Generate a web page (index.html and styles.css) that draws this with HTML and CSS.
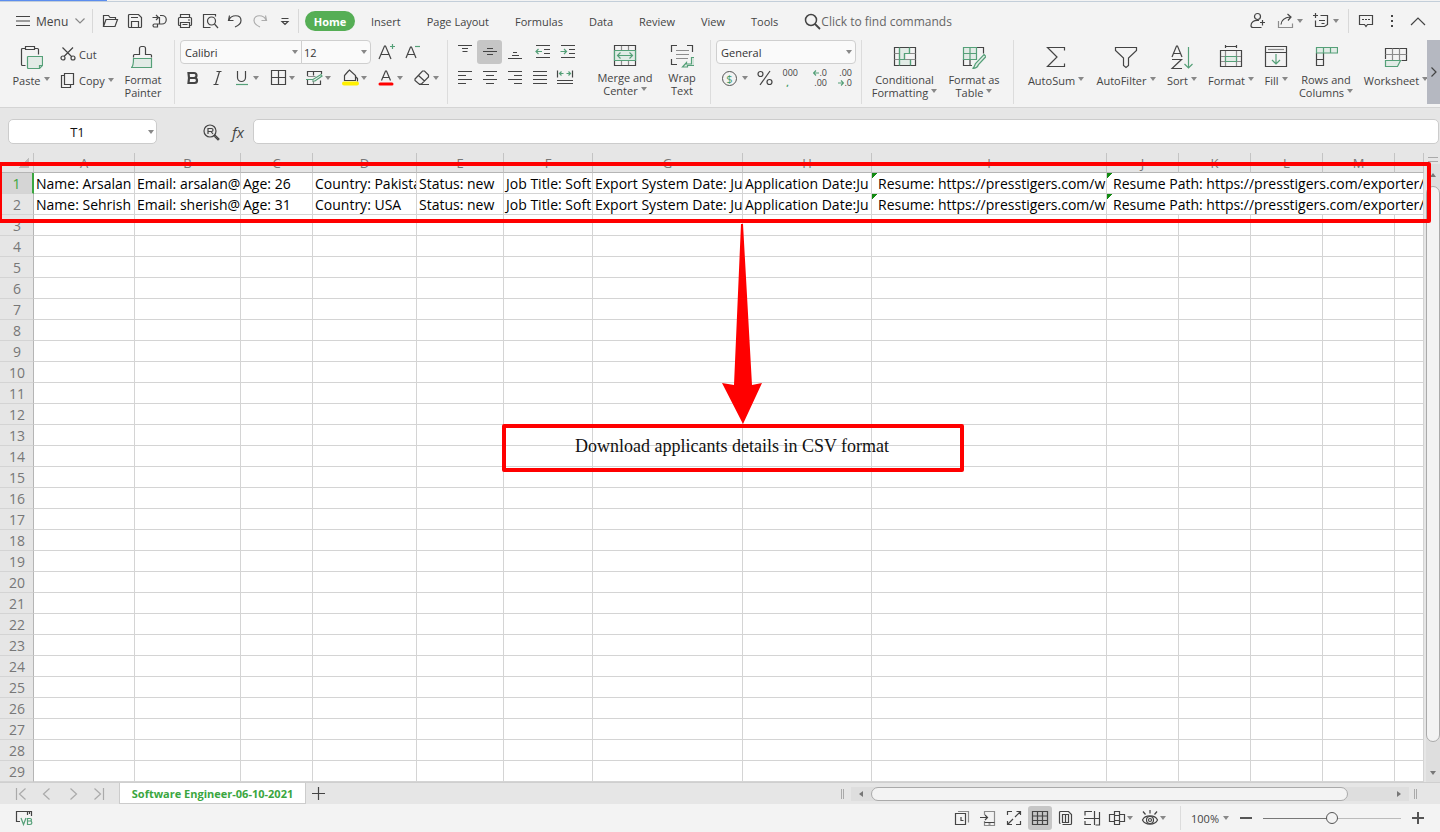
FILE: index.html
```html
<!DOCTYPE html>
<html lang="en">
<head>
<meta charset="utf-8">
<title>Software Engineer-06-10-2021</title>
<link rel="stylesheet" href="styles.css">
</head>
<body>
<svg class="sprite" aria-hidden="true">
  <!-- quick access, 18x18 -->
  <symbol id="i-open" viewBox="0 0 18 18"><path d="M2.500 14V3.500h5l1.500 2H14.500v2M2.500 14.500h11.500l2.500-7H5z"/></symbol>
  <symbol id="i-save" viewBox="0 0 18 18"><path d="M2.500 13V3.500a1 1 0 0 1 1-1h9l3 3v9a1 1 0 0 1-1 1h-11a1 1 0 0 1-1-1zM5.500 15.500v-6h7v6M5 5.500h7"/></symbol>
  <symbol id="i-export" viewBox="0 0 18 18"><path d="M1.500 5.500h5M5 3l2.500 2.500L5 8M9 3.500h2a4 4 0 0 1 0 8.500H6.500V15h-3a1.500 1.500 0 0 1 0-3H8.500V5"/></symbol>
  <symbol id="i-print" viewBox="0 0 18 18"><path d="M4.500 5.500v-3h9v3M4.500 13.500h-1a1 1 0 0 1-1-1v-6a1 1 0 0 1 1-1h11a1 1 0 0 1 1 1v6a1 1 0 0 1-1 1h-1M4.500 10.500h9v5h-9zM6.500 12.500h5M12 8h2"/></symbol>
  <symbol id="i-preview" viewBox="0 0 18 18"><path d="M14.500 4.500v-2h-12v13h7"/><circle cx="10.500" cy="9" r="4"/><path d="M13.500 12l3.500 4"/></symbol>
  <symbol id="i-undo" viewBox="0 0 18 18"><path d="M3.500 3.500L2.500 8.500h5M3 8C5 2.500 15 2 15 8.500c0 3-2.500 5-6 6.500"/></symbol>
  <symbol id="i-redo" viewBox="0 0 18 18"><path d="M14.500 3.500l1 5h-5M15 8C13 2.500 3 2 3 8.500c0 3 2.500 5 6 6.500"/></symbol>
  <symbol id="i-more" viewBox="0 0 18 18"><path d="M5.500 6.500h7M6 9.500l3 3 3-3z"/></symbol>
  <symbol id="i-burger" viewBox="0 0 14 12"><path d="M0 1.500h14M0 6h14M0 10.500h14"/></symbol>
  <symbol id="i-down" viewBox="0 0 10 6"><path d="M.5.5l4.500 4.500L9.500.5"/></symbol>
  <symbol id="i-up" viewBox="0 0 16 10"><path d="M1 9l7-7 7 7"/></symbol>
  <symbol id="i-search" viewBox="0 0 18 18"><circle cx="8" cy="8" r="5.500" stroke-width="1.500"/><path stroke-width="1.800" d="M12 12l5 5"/></symbol>
  <symbol id="i-person" viewBox="0 0 18 18"><circle cx="8.500" cy="4.500" r="3"/><path d="M10 8.500C5 7.500 2 10.500 2 13.500c0 1.500.5 2 2 2h8.500M13.500 8v5.500M11 10.500h5"/></symbol>
  <symbol id="i-share" viewBox="0 0 18 18"><path class="s" d="M2.500 9v6.500h14v-4"/><path d="M5 12.500c.5-5 4-7 9-7.500M11.500 2l3.500 3-3 3.500"/></symbol>
  <symbol id="i-addon" viewBox="0 0 18 18"><path d="M3.500 1v5M1 3.500h5M8.500 3.500h7v9l-3 2h-9V8.500M7 8.500h6M9.500 11.500h3"/></symbol>
  <symbol id="i-chat" viewBox="0 0 18 18"><path d="M2.500 3.500h13v9h-5L9 14.500l-1.500-2h-5zM5 7.500h2M8 7.500h2M11 7.500h2"/></symbol>
  <symbol id="i-dots" viewBox="0 0 4 14"><path stroke-width="2" d="M1 2h2M1 7h2M1 12h2"/></symbol>
  <!-- ribbon, large 24x24 -->
  <symbol id="b-paste" viewBox="0 0 24 24"><path d="M6.500 3.500h-3a1 1 0 0 0-1 1v15a1 1 0 0 0 1 1h3M15.500 3.500h3a1 1 0 0 1 1 1v5M6.500 1.500h9v3h-9z"/><path class="gf" d="M8.500 11.500h15v9l-3 3H9.500a1 1 0 0 1-1-1v-11M23.500 20.500h-3v3"/></symbol>
  <symbol id="b-painter" viewBox="0 0 24 24"><path d="M2.500 12.500v-2a1 1 0 0 1 1-1h5v-6a2 2 0 0 1 2-2h2a2 2 0 0 1 2 2v6h5a1 1 0 0 1 1 1v2"/><path class="gf" d="M2.500 13.500h18v9h-20c1.500-1 2-3 2-9z"/></symbol>
  <symbol id="b-merge" viewBox="0 0 24 24"><path d="M1.500 1.500h21v20h-21z"/><path class="s" d="M8.500 2v4.500M15.500 2v4.500M8.500 17v4M15.500 17v4"/><path class="gf" d="M1.500 6.500h21v10h-21z"/><path class="g" d="M5 11.500h14M7.500 8.500l-3 3 3 3M16.500 8.500l3 3-3 3"/></symbol>
  <symbol id="b-wrap" viewBox="0 0 24 24"><path d="M7 1.500H1.500V8M17 1.500h5.500V8M1.500 15v5.500H7"/><path class="s" d="M6 6.500h13M6 10.500h13M6 14.500h12"/><path class="gf" d="M21.500 13.500h3v8h-7v1.500h-5l4-4.500v1.500h5z"/></symbol>
  <symbol id="b-cond" viewBox="0 0 24 24"><path class="gf" d="M6.500 2.500h10v6h-5v6h-5zM6.500 14.500h11v6h-11z"/><path d="M1.500 2.500h21v18h-21z"/><path class="s" d="M1.500 8.500h5M1.500 14.500h5M17 8.500h5.500M12 14.500h10.500"/><path class="g" d="M6.500 2.500v18M11.500 8.500h5v-6M17.500 14.500v6M11.500 8.500v6"/></symbol>
  <symbol id="b-table" viewBox="0 0 24 24"><path d="M15 2.500h6.500v6M1.500 14v6.500H10M8 14v6M1.500 14.500h5"/><path class="gf" d="M1.500 2.500h13v12h-13z"/><path class="g" d="M1.500 8.500h13M8 2.500v12"/><path class="gf" d="M22 9.500l2 2-7.500 8c-1 3-3 4-6 4 2-1 2-3 3-5z"/></symbol>
  <symbol id="b-sum" viewBox="0 0 24 24"><path d="M20.500 5.500v-3h-17l9.500 9.500-9.500 9.500h17v-3"/></symbol>
  <symbol id="b-filter" viewBox="0 0 24 24"><path d="M1.500 2.500h21v3l-8 7.500v7.500l-2.500 2-2.500-2V13l-8-7.500z"/></symbol>
  <symbol id="b-sort" viewBox="0 0 24 24"><path d="M2 12L6.500 1h1L12 12M3.500 8.500h7M2 14.500h9.500L2 23.500h10"/><path class="g" d="M18.500 2v21M14.500 19l4 4 4-4"/></symbol>
  <symbol id="b-format" viewBox="0 0 24 24"><path d="M6 1.500h12M6.500 0v3M17.500 0v3M1.500 5.500h21v16h-21z"/><path class="s" d="M6.500 6v15M17.500 6v15M2 11.500h20M2 16.500h20"/><path class="gf" d="M6.500 11.500h11v5h-11z"/></symbol>
  <symbol id="b-fill" viewBox="0 0 24 24"><path d="M1.500 1.500h21v20h-21zM1.500 7.500h21"/><path class="s" d="M4 4.500h16"/><path class="g" d="M12 9v10M8 15l4 4 4-4"/></symbol>
  <symbol id="b-rows" viewBox="0 0 24 24"><path d="M2.500 8v12.500h7V8M2.500 14.500h7"/><path class="gf" d="M2.500 2.500h21v5.500h-21z"/><path class="g" d="M9.500 2.500V8M16.500 2.500V8"/></symbol>
  <symbol id="b-work" viewBox="0 0 24 24"><path d="M1.500 14V3.500h21v12h-5"/><path class="s" d="M8.500 3.500v12M15.500 3.500v12M1.500 9.500h21"/><path class="gf" d="M1.500 15.500h15l-3 6h-12z"/></symbol>
  <!-- ribbon, small 20x20 -->
  <symbol id="s-cut" viewBox="0 0 16 16"><path d="M2.500 1.500L12 11M13 1.500L4 10.500"/><circle cx="3" cy="12" r="2"/><circle cx="13" cy="12" r="2"/></symbol>
  <symbol id="s-copy" viewBox="0 0 16 16"><path d="M4.500 1.500h9v11h-9zM4.500 3.500h-3v12h9v-3"/></symbol>
  <symbol id="s-bigger" viewBox="0 0 20 20"><path d="M2 17L7.500 4h1L14 17M4 12.500h8"/><path class="g" d="M13 4.500h5M15.500 2v5"/></symbol>
  <symbol id="s-smaller" viewBox="0 0 20 20"><path d="M4 16L8.500 5h1L14 16M5.500 12.500h7"/><path class="g" d="M13 4.500h5"/></symbol>
  <symbol id="s-bold" viewBox="0 0 20 20"><path stroke-width="2.200" d="M5.500 5H11a2.300 2.300 0 0 1 0 5H6zM6 10h5.500a2.500 2.500 0 0 1 0 5h-6z"/></symbol>
  <symbol id="s-italic" viewBox="0 0 20 20"><path d="M8.500 3.500h5M5.500 16.500h5M11.500 3.500l-4 13"/></symbol>
  <symbol id="s-under" viewBox="0 0 20 20"><path d="M5.500 3v6.500a4 4 0 0 0 8 0V3"/><path class="g" d="M4 16.500h12"/></symbol>
  <symbol id="s-border" viewBox="0 0 20 20"><path d="M3.500 2.500h14v14h-14zM10.500 2.500v14M3.500 9.500h14"/></symbol>
  <symbol id="s-style" viewBox="0 0 20 20"><path d="M17.500 6V3.500h-14v4.500M3.500 12v4.500h13v-4M9.500 3.500v4"/><path class="s" d="M3.500 8.500h8M9.500 13v3"/><path class="g" d="M2 11.500h7l8-5 1 1.500-7 5H8"/></symbol>
  <symbol id="s-fill" viewBox="0 0 20 20"><path d="M8 3.500l1.500-1.500 6 5.500v5h-11v-5zM15 8l2.500 2.500v3"/><path class="yellow" d="M4 15.500h13"/></symbol>
  <symbol id="s-color" viewBox="0 0 20 20"><path d="M5.500 12.500L9.500 3h1l4 9.500M7 9.500h6"/><path class="red" d="M4 16h12"/></symbol>
  <symbol id="s-erase" viewBox="0 0 20 20"><path d="M3 11l7.500-8h2l4 4v2L9.500 16H7l-4-3.500zM6.500 7.500l6 5.500M7 16.500h10"/></symbol>
  <symbol id="s-top" viewBox="0 0 20 20"><path d="M3 3.500h14M7 6.500h6M7.500 9.500h5"/></symbol>
  <symbol id="s-mid" viewBox="0 0 20 20"><path d="M7 6.500h6M3 9.500h14M7 12.500h6"/></symbol>
  <symbol id="s-bot" viewBox="0 0 20 20"><path d="M8 10.500h4M7 13.500h7M3 16.500h14"/></symbol>
  <symbol id="s-outd" viewBox="0 0 20 20"><path d="M3 3.500h14M11 7.500h6M11 11.500h6M3 15.500h14"/><path class="g" d="M3 9.500h6M5.500 7L3 9.500 5.500 12"/></symbol>
  <symbol id="s-ind" viewBox="0 0 20 20"><path d="M3 3.500h14M11 7.500h6M11 11.500h6M3 15.500h14"/><path class="g" d="M2.500 9.500h6M6 7l2.500 2.500L6 12"/></symbol>
  <symbol id="s-left" viewBox="0 0 20 20"><path d="M3 3.500h14M3 7.500h8M3 11.500h14M3 15.500h8"/></symbol>
  <symbol id="s-cen" viewBox="0 0 20 20"><path d="M3 3.500h14M6 7.500h8M3 11.500h14M6 15.500h8"/></symbol>
  <symbol id="s-right" viewBox="0 0 20 20"><path d="M3 3.500h14M9 7.500h8M3 11.500h14M9 15.500h8"/></symbol>
  <symbol id="s-just" viewBox="0 0 20 20"><path d="M3 3.500h14M3 7.500h14M3 11.500h14M3 15.500h14"/></symbol>
  <symbol id="s-dist" viewBox="0 0 20 20"><path d="M2.500 2.500v7M17.500 2.500v7M2 12.500h16M2 15.500h16"/><path class="g" d="M4.500 5.500h4M11.500 5.500h4M6.500 3.500l-2 2 2 2M13.500 3.500l2 2-2 2"/></symbol>
  <symbol id="s-arrowl" viewBox="0 0 6 6"><path class="g" d="M.5 3h5.500M3 .5L.5 3 3 5.500"/></symbol>
  <symbol id="s-arrowr" viewBox="0 0 6 6"><path class="g" d="M0 3h5.500M3 .5L5.500 3 3 5.500"/></symbol>
  <symbol id="s-percent" viewBox="0 0 20 20"><circle cx="5.500" cy="6" r="2.500"/><circle cx="14.500" cy="14" r="2.500"/><path d="M15 3L5 17"/></symbol>
  <!-- formula bar, sheet bar and status bar, 18x18 -->
  <symbol id="i-cellfind" viewBox="0 0 18 18"><circle cx="8" cy="8" r="6"/><path d="M6 11V5.500h3.500a1.500 1.500 0 0 1 0 3H6M9 8.500l2 2.500M12 13l1-1 4 4-1 1z"/></symbol>
  <symbol id="n-first" viewBox="0 0 12 12"><path d="M1.500 0v12M10.500.5L4.500 6l6 5.500"/></symbol>
  <symbol id="n-prev" viewBox="0 0 12 12"><path d="M8.500.5L2.500 6l6 5.500"/></symbol>
  <symbol id="n-next" viewBox="0 0 12 12"><path d="M3.500.5l6 5.500-6 5.500"/></symbol>
  <symbol id="n-last" viewBox="0 0 12 12"><path d="M10.500 0v12M1.500.5l6 5.500-6 5.500"/></symbol>
  <symbol id="i-plus" viewBox="0 0 14 14"><path d="M6.500 0v13M0 6.500h13"/></symbol>
  <symbol id="t-vb" viewBox="0 0 18 18"><path d="M5 12.500H1.500v-10h12M12.500 6V2.500h4V7M14.500 2v3"/><path class="g" d="M6 9l2.500 6.500L11 9M12.500 9.500h2.500c2 0 2 2.500 0 2.500h-2.500zM12.500 12H15c2.500 0 2.500 3.500 0 3.500h-2.500z"/></symbol>
  <symbol id="t-clock" viewBox="0 0 18 18"><path class="s" d="M5 2.500h10.500v11"/><path d="M2.500 4.500h10v11h-10zM8 8v3.500h2.500"/></symbol>
  <symbol id="t-phone" viewBox="0 0 18 18"><path class="s" d="M5.500 6V2.500h10v14h-10V12"/><path d="M5.500 13.500h10M1 8.500h7.500M6 6l2.500 2.500L6 11M9.500 15h2"/></symbol>
  <symbol id="t-full" viewBox="0 0 18 18"><path d="M2.500 6V2.500H7M11.500 2.500h4V6M2.500 12v3.500H7M11 15.500h4.500V12M15 3l-5 5M3 15l5-5"/></symbol>
  <symbol id="t-grid" viewBox="0 0 18 18"><path d="M1.500 2.500h15v13h-15zM6.500 2.500v13M11.500 2.500v13M1.500 7h15M1.500 11.500h15"/></symbol>
  <symbol id="t-page" viewBox="0 0 18 18"><path d="M3.500 14.500a1 1 0 0 1-1-1v-10a1 1 0 0 1 1-1h8l3 3V14.500a1 1 0 0 1-1 1h-8M5.500 5.500h6v8h-6zM8.500 5.500v8"/></symbol>
  <symbol id="t-break" viewBox="0 0 18 18"><path d="M2 6.500v-4h7M16.500 3v13h-4M1 9.500h16M2 12v3.500h6M11.500 2v7M11.500 9v7"/></symbol>
  <symbol id="t-cross" viewBox="0 0 18 18"><path d="M6.500 2.500h5v13h-5zM6 5.500H1.500v7H6M12 5.500h4.500v7H12M6.500 6.500h5M6.500 11.500h5"/></symbol>
  <symbol id="t-eye" viewBox="0 0 18 18"><path d="M1.500 11C4 5.500 14 5.500 16.500 11 14 16.500 4 16.500 1.500 11zM9 1v3.500M2 2.500l2.500 3M16 2.500l-2.500 3"/><circle cx="9" cy="11" r="3.500"/><circle cx="9" cy="11" r="1.500"/></symbol>
</svg>

<div class="window-edge"><div class="window-edge-active"></div></div>

<header class="menubar">
  <button class="menu-btn"><svg class="burger"><use href="#i-burger"/></svg>Menu<svg class="chev"><use href="#i-down"/></svg></button>
  <div class="quick">
    <button aria-label="Open"><svg><use href="#i-open"/></svg></button>
    <button aria-label="Save"><svg><use href="#i-save"/></svg></button>
    <button aria-label="Export"><svg><use href="#i-export"/></svg></button>
    <button aria-label="Print"><svg><use href="#i-print"/></svg></button>
    <button aria-label="Print preview"><svg><use href="#i-preview"/></svg></button>
    <button aria-label="Undo"><svg><use href="#i-undo"/></svg></button>
    <button aria-label="Redo" class="faded"><svg><use href="#i-redo"/></svg></button>
    <button aria-label="More"><svg><use href="#i-more"/></svg></button>
  </div>
  <nav class="tabs">
    <button class="tab-on">Home</button>
    <button>Insert</button>
    <button>Page Layout</button>
    <button>Formulas</button>
    <button>Data</button>
    <button>Review</button>
    <button>View</button>
    <button>Tools</button>
  </nav>
  <label class="search"><svg><use href="#i-search"/></svg><input type="text" aria-label="Find commands" placeholder="Click to find commands"></label>
  <div class="account">
    <button aria-label="Collaborate"><svg><use href="#i-person"/></svg></button>
    <button aria-label="Share" class="drop"><svg><use href="#i-share"/></svg><i class="caret"></i></button>
    <button aria-label="Add-ons" class="drop"><svg><use href="#i-addon"/></svg><i class="caret"></i></button>
    <div class="account-end">
      <button aria-label="Comments"><svg><use href="#i-chat"/></svg></button>
      <button aria-label="Options"><svg class="dots"><use href="#i-dots"/></svg></button>
      <button aria-label="Collapse ribbon"><svg class="up"><use href="#i-up"/></svg></button>
    </div>
  </div>
</header>

<section class="ribbon" aria-label="Home">
  <div class="group g-clip">
    <button class="big"><svg><use href="#b-paste"/></svg><span>Paste<i class="caret"></i></span></button>
    <div class="small-col">
      <button><svg><use href="#s-cut"/></svg>Cut</button>
      <button><svg><use href="#s-copy"/></svg>Copy<i class="caret"></i></button>
    </div>
    <button class="big two painter"><svg><use href="#b-painter"/></svg><span>Format<br>Painter</span></button>
  </div>
  <div class="group g-font">
    <div class="rows">
      <div class="row">
        <div class="combo font-name"><select aria-label="Font"><option>Calibri</option></select><i class="caret"></i></div>
        <div class="combo font-size"><select aria-label="Font size"><option>12</option></select><i class="caret"></i></div>
        <button class="tool grow" aria-label="Increase font size"><svg><use href="#s-bigger"/></svg></button>
        <button class="tool" aria-label="Decrease font size"><svg><use href="#s-smaller"/></svg></button>
      </div>
      <div class="row">
        <button class="tool" aria-label="Bold"><svg><use href="#s-bold"/></svg></button>
        <button class="tool" aria-label="Italic"><svg><use href="#s-italic"/></svg></button>
        <button class="tool split" aria-label="Underline"><svg><use href="#s-under"/></svg><i class="caret"></i></button>
        <button class="tool split" aria-label="Borders"><svg><use href="#s-border"/></svg><i class="caret"></i></button>
        <button class="tool split" aria-label="Cell style"><svg><use href="#s-style"/></svg><i class="caret"></i></button>
        <button class="tool split" aria-label="Fill color"><svg><use href="#s-fill"/></svg><i class="caret"></i></button>
        <button class="tool split" aria-label="Font color"><svg><use href="#s-color"/></svg><i class="caret"></i></button>
        <button class="tool split" aria-label="Clear"><svg><use href="#s-erase"/></svg><i class="caret"></i></button>
      </div>
    </div>
  </div>
  <div class="group g-align">
    <div class="rows">
      <div class="row">
        <button class="tool" aria-label="Top align"><svg><use href="#s-top"/></svg></button>
        <button class="tool pressed" aria-label="Middle align"><svg><use href="#s-mid"/></svg></button>
        <button class="tool" aria-label="Bottom align"><svg><use href="#s-bot"/></svg></button>
        <button class="tool indent" aria-label="Decrease indent"><svg><use href="#s-outd"/></svg></button>
        <button class="tool" aria-label="Increase indent"><svg><use href="#s-ind"/></svg></button>
      </div>
      <div class="row">
        <button class="tool" aria-label="Align left"><svg><use href="#s-left"/></svg></button>
        <button class="tool" aria-label="Center"><svg><use href="#s-cen"/></svg></button>
        <button class="tool" aria-label="Align right"><svg><use href="#s-right"/></svg></button>
        <button class="tool" aria-label="Justify"><svg><use href="#s-just"/></svg></button>
        <button class="tool" aria-label="Distribute"><svg><use href="#s-dist"/></svg></button>
      </div>
    </div>
    <button class="big merge"><svg><use href="#b-merge"/></svg><span>Merge and<br>Center<i class="caret"></i></span></button>
    <button class="big wrap"><svg><use href="#b-wrap"/></svg><span>Wrap<br>Text</span></button>
  </div>
  <div class="group g-number">
    <div class="rows">
      <div class="row">
        <div class="combo number"><select aria-label="Number format"><option>General</option></select><i class="caret"></i></div>
      </div>
      <div class="row">
        <button class="tool split" aria-label="Currency"><span class="coin">$</span><i class="caret"></i></button>
        <button class="tool" aria-label="Percent"><svg><use href="#s-percent"/></svg></button>
        <button class="tool digits" aria-label="Comma style"><span>000</span><b>,</b></button>
        <button class="tool digits dec" aria-label="Increase decimal"><span><svg><use href="#s-arrowl"/></svg>.0</span><span>.00</span></button>
        <button class="tool digits" aria-label="Decrease decimal"><span>.00</span><span><svg><use href="#s-arrowr"/></svg>.0</span></button>
      </div>
    </div>
  </div>
  <div class="group g-style">
    <button class="big two cond"><svg><use href="#b-cond"/></svg><span>Conditional<br>Formatting<i class="caret"></i></span></button>
    <button class="big two astable"><svg><use href="#b-table"/></svg><span>Format as<br>Table<i class="caret"></i></span></button>
  </div>
  <div class="group g-edit">
    <button class="big w70"><svg><use href="#b-sum"/></svg><span>AutoSum<i class="caret"></i></span></button>
    <button class="big w70"><svg><use href="#b-filter"/></svg><span>AutoFilter<i class="caret"></i></span></button>
    <button class="big w42"><svg><use href="#b-sort"/></svg><span>Sort<i class="caret"></i></span></button>
    <button class="big w56"><svg><use href="#b-format"/></svg><span>Format<i class="caret"></i></span></button>
    <button class="big w34"><svg><use href="#b-fill"/></svg><span>Fill<i class="caret"></i></span></button>
    <button class="big two w66"><svg><use href="#b-rows"/></svg><span>Rows and<br>Columns<i class="caret"></i></span></button>
    <button class="big w74"><svg><use href="#b-work"/></svg><span>Worksheet<i class="caret"></i></span></button>
  </div>
  <button class="ribbon-next" aria-label="Scroll ribbon"><svg><use href="#i-down"/></svg></button>
</section>

<section class="formula" aria-label="Formula bar">
  <div class="namebox"><input type="text" aria-label="Name box" value="T1"><i class="caret"></i></div>
  <button class="cellfind" aria-label="Find cell"><svg><use href="#i-cellfind"/></svg></button>
  <button class="fx" aria-label="Insert function">fx</button>
  <input class="formula-input" type="text" aria-label="Formula">
</section>

<main class="sheet">
  <div class="grid-wrap">
    <table class="grid">
      <colgroup><col class="c-n"><col class="c-a"><col class="c-b"><col class="c-s"><col class="c-d"><col class="c-e"><col class="c-f"><col class="c-g"><col class="c-h"><col class="c-i"><col class="c-s"><col class="c-s"><col class="c-s"><col class="c-s"><col></colgroup>
      <thead><tr><th class="corner"></th><th>A</th><th>B</th><th>C</th><th>D</th><th>E</th><th>F</th><th>G</th><th>H</th><th>I</th><th>J</th><th>K</th><th>L</th><th>M</th><th></th></tr></thead>
      <tbody id="cells"></tbody>
    </table>
  </div>
  <div class="vscroll">
    <div class="vsplit"></div>
    <button class="arrow-up" aria-label="Scroll up"></button>
    <div class="vthumb"></div>
    <button class="arrow-down" aria-label="Scroll down"></button>
  </div>
  <div class="mark-rows"></div>
  <svg class="mark-arrow" viewBox="0 0 42 202"><path d="M20 1h2L31 162l10-2-19 41L1 160l12 2z"/></svg>
  <div class="mark-note">Download applicants details in CSV format</div>
</main>

<div class="sheetbar">
  <div class="sheetnav">
    <button aria-label="First sheet"><svg><use href="#n-first"/></svg></button>
    <button aria-label="Previous sheet"><svg><use href="#n-prev"/></svg></button>
    <button aria-label="Next sheet"><svg><use href="#n-next"/></svg></button>
    <button aria-label="Last sheet"><svg><use href="#n-last"/></svg></button>
  </div>
  <button class="sheet-tab">Software Engineer-06-10-2021</button>
  <button class="sheet-add" aria-label="New sheet"><svg><use href="#i-plus"/></svg></button>
  <div class="grip"></div>
  <div class="hscroll">
    <button class="arrow-left" aria-label="Scroll left"></button>
    <div class="hthumb"></div>
    <button class="arrow-right" aria-label="Scroll right"></button>
  </div>
  <div class="grip"></div>
</div>

<footer class="status">
  <button class="macro" aria-label="Macros"><svg><use href="#t-vb"/></svg></button>
  <div class="views">
    <button aria-label="Backup"><svg><use href="#t-clock"/></svg></button>
    <button aria-label="Send to phone"><svg><use href="#t-phone"/></svg></button>
    <button aria-label="Full screen"><svg><use href="#t-full"/></svg></button>
    <button class="pressed" aria-label="Normal view"><svg><use href="#t-grid"/></svg></button>
    <button aria-label="Page layout"><svg><use href="#t-page"/></svg></button>
    <button aria-label="Page break preview"><svg><use href="#t-break"/></svg></button>
    <button class="drop" aria-label="Reading layout"><svg><use href="#t-cross"/></svg><i class="caret"></i></button>
    <button class="drop" aria-label="Eye protection"><svg><use href="#t-eye"/></svg><i class="caret"></i></button>
  </div>
  <div class="zoom">
    <button class="percent">100%<i class="caret"></i></button>
    <button class="minus" aria-label="Zoom out"></button>
    <input type="range" min="0" max="100" value="50" aria-label="Zoom">
    <button class="plus" aria-label="Zoom in"></button>
  </div>
</footer>
<script src="grid.js"></script>
</body>
</html>
```

FILE: styles.css
```css
* { box-sizing: border-box; }
body {
  margin: 0;
  min-height: 100vh;
  display: flex;
  flex-direction: column;
  background: #f3f3f3;
  color: #444;
  font: 11px/13px "Open Sans", "Noto Sans", sans-serif;
  overflow: hidden;
}
button, input, select {
  font: inherit;
  color: inherit;
  background: none;
  border: 0;
  padding: 0;
  margin: 0;
}
button { display: flex; align-items: center; justify-content: center; flex: none; white-space: nowrap; }
svg { flex: none; display: block; fill: none; stroke: #444; stroke-width: 1.2; }
.sprite { position: absolute; width: 0; height: 0; }
.g { stroke: #55a078; }
.gf { stroke: #55a078; fill: #e2ebe6; }
.s { stroke: #8c8c8c; }
.yellow { stroke: #fff000; stroke-width: 4; stroke-linecap: round; }
.red { stroke: #f00; stroke-width: 3; stroke-linecap: round; }
.caret {
  display: inline-block;
  flex: none;
  width: 0;
  height: 0;
  border: 3px solid transparent;
  border-top: 4px solid #888;
  border-bottom: 0;
}

.window-edge { height: 2px; border-bottom: 1px solid #c3ced9; }
.window-edge-active { width: 107px; height: 1px; background: #5b8def; }

/* menu bar */
.menubar { display: flex; align-items: center; height: 38px; flex: none; }
.menu-btn { width: 93px; height: 24px; padding-left: 16px; gap: 6px; justify-content: flex-start; border-right: 1px solid #d8d8d8; font-size: 12px; }
.burger { width: 14px; height: 12px; }
.chev { width: 10px; height: 6px; margin-left: 1px; stroke: #888; }
.quick { display: flex; padding: 0 1px 0 4px; height: 24px; border-right: 1px solid #d8d8d8; }
.quick button { width: 25px; height: 24px; }
.quick svg, .account svg, .cellfind svg { width: 18px; height: 18px; }
.faded { opacity: .4; }
.tabs { display: flex; align-items: center; gap: 26px; padding-left: 6px; }
.tabs .tab-on { width: 50px; height: 20px; margin-right: -10px; border-radius: 10px; background: #55ae55; color: #fff; font-weight: 700; }
.search { display: flex; align-items: center; margin-left: 25px; font-size: 12px; flex: 1; }
.search svg { width: 18px; height: 18px; }
.search input { width: 160px; height: 20px; }
.search input::placeholder { color: #666; opacity: 1; }
.account { display: flex; align-items: center; padding-right: 9px; }
.account button { width: 26px; height: 24px; }
.account .drop { width: 36px; gap: 3px; }
.account-end { display: flex; align-items: center; margin-left: 5px; padding-left: 4px; border-left: 1px solid #d8d8d8; }
.account svg.dots { width: 4px; height: 14px; }
.account svg.up { width: 16px; height: 10px; }

/* ribbon */
.ribbon { display: flex; flex: none; height: 68px; padding-bottom: 3px; border-bottom: 1px solid #d4d4d4; }
.group { display: flex; align-items: flex-start; flex: none; border-right: 1px solid #dcdcdc; }
.big { flex-direction: column; justify-content: flex-start; padding-top: 5px; gap: 5px; line-height: 13px; text-align: center; }
.big svg { width: 24px; height: 24px; }
.big .caret { margin-left: 3px; vertical-align: 4px; }
.big.two { gap: 4px; }
.g-clip { width: 175px; padding-left: 9px; }
.g-clip .big { width: 44px; }
.small-col { width: 66px; padding: 1px 0 0 7px; }
.small-col button { height: 26px; gap: 3px; }
.small-col svg { width: 16px; height: 16px; }
.g-clip .painter { width: 48px; }
.rows { display: flex; flex-direction: column; gap: 2px; }
.row { display: flex; align-items: center; height: 24px; }
.tool { width: 25px; height: 24px; }
.tool svg { width: 20px; height: 20px; }
.split { width: 36px; justify-content: flex-start; padding-left: 2px; }
.split .caret { margin-left: 1px; }
.pressed { background: #c6c6c6; border-radius: 3px; }
.g-font { width: 273px; padding-left: 5px; }
.combo { display: flex; align-items: center; height: 24px; padding-right: 3px; border: 1px solid #cfcfcf; background: #fafafa; }
.combo select { flex: 1; min-width: 0; height: 20px; padding-left: 4px; appearance: none; color: #333; }
.font-name { width: 122px; border-radius: 4px 0 0 4px; }
.font-size { width: 70px; margin-left: -1px; border-radius: 0 4px 4px 0; }
.font-size select { padding-left: 2px; }
.grow { margin-left: 3px; }
.g-align { width: 263px; padding-left: 4px; }
.indent { margin-left: 3px; }
.g-align .rows { width: 142px; }
.merge { width: 62px; padding-top: 4px; gap: 3px; }
.wrap { width: 36px; margin-left: 8px; padding-top: 4px; gap: 3px; }
.g-number { width: 151px; padding-left: 5px; }
.number { width: 140px; border-radius: 4px; }
.coin { width: 15px; height: 15px; margin: 0 4px 0 6px; border: 1px solid #555; border-radius: 50%; color: #3f9a68; line-height: 13px; }
.g-number .split { padding-left: 0; }
.digits { flex-direction: column; font-size: 9px; line-height: 10px; align-items: flex-end; padding-right: 4px; }
.digits span { display: flex; align-items: center; height: 10px; }
.digits svg { width: 6px; height: 6px; }
.digits b { align-self: center; color: #3f9a68; }
.dec { margin-left: 4px; }
.g-style { width: 152px; padding-left: 6px; gap: 3px; }
.cond { width: 73px; }
.astable { width: 60px; }
.g-edit { flex: 1 1 0; min-width: 0; padding-left: 7px; border-right: 0; overflow: hidden; }
.w34 { width: 34px; }
.w42 { width: 42px; }
.w56 { width: 56px; }
.w66 { width: 66px; }
.w70 { width: 70px; }
.w74 { width: 74px; }
.ribbon-next { width: 13px; background: #b5b8c1; align-self: stretch; }
.ribbon-next svg { width: 10px; height: 6px; transform: rotate(-90deg); }

/* formula bar */
.formula { display: flex; align-items: center; flex: none; height: 45px; padding: 2px 1px 0 8px; background: #e6e6e6; color: #222; }
.namebox { display: flex; align-items: center; width: 149px; height: 25px; padding-right: 2px; border: 1px solid #ccc; border-radius: 5px; background: #fff; }
.namebox input { flex: 1; min-width: 0; padding-right: 2px; text-align: center; font-size: 13px; line-height: 18px; color: #111; }
.cellfind { width: 24px; margin-left: 42px; }
.fx { width: 30px; color: #444; font: italic 15px/20px "Open Sans", sans-serif; }
.formula-input { flex: 1; min-width: 0; height: 25px; border: 1px solid #ccc; border-radius: 5px; background: #fff; }

/* sheet */
.sheet { position: relative; display: flex; flex: 1 0 auto; background: #e6e6e6; }
.grid-wrap { flex: 1; min-width: 0; }
.grid { width: 100%; table-layout: fixed; border-collapse: separate; border-spacing: 0; background: #fff; color: #000; font-size: 14px; line-height: 18px; }
.grid th, .grid td { height: 21px; padding: 2px 0 0; border-right: 1px solid #d4d4d4; border-bottom: 1px solid #d4d4d4; white-space: nowrap; overflow: hidden; }
.grid thead th { height: 20px; line-height: 17px; background: #e6e6e6; color: #777; font-weight: 400; font-size: 13px; border-right-color: #c4c4c4; border-bottom-color: #b5b5b5; }
.grid tbody th { padding-left: 1px; background: #e6e6e6; color: #777; font-weight: 400; border-right-color: #b5b5b5; }
.grid tbody th.current { background: #d5d5d5; color: #3aa640; border-right: 2px solid #3aa640; }
.grid td { padding-left: 2px; }
.grid td.flag { padding-left: 6px; background: linear-gradient(135deg, #128a12 4px, transparent 4px) no-repeat; }
.grid .corner { background: linear-gradient(135deg, transparent 50%, #bbb 50%) 19px 5px / 10px 10px no-repeat #e6e6e6; }
.c-n { width: 34px; }
.c-a { width: 101px; }
.c-b { width: 106px; }
.c-s { width: 72px; }
.c-d { width: 104px; }
.c-e { width: 87px; }
.c-f { width: 89px; }
.c-g { width: 150px; }
.c-h { width: 129px; }
.c-i { width: 235px; }
.vscroll { display: flex; flex-direction: column; width: 14px; margin-left: 2px; background: #dedede; }
.vsplit { height: 11px; padding-top: 4px; background: #e6e6e6; }
.vsplit::before { content: ""; display: block; width: 10px; height: 3px; margin-left: 2px; border: 1px solid #aaa; border-width: 1px 0; }
.vthumb { flex: 1; border: 1px solid #aaa; border-radius: 7px; background: #f3f3f3; }
.arrow-up { height: 22px; }
.arrow-down { height: 40px; padding-top: 22px; }
.arrow-up::before { content: ""; border: 3px solid transparent; border-bottom: 4px solid #777; border-top: 0; }
.arrow-down::before { content: ""; border: 3px solid transparent; border-top: 4px solid #777; border-bottom: 0; }

/* annotations drawn over the cells */
.mark-rows { position: absolute; left: -2px; right: 9px; top: 9px; height: 61px; border: 4px solid #f00; border-radius: 2px; }
.mark-arrow { position: absolute; left: 721px; top: 70px; width: 42px; height: 202px; fill: #f00; stroke: none; }
.mark-note { position: absolute; left: 502px; top: 271px; width: 462px; height: 48px; padding-right: 2px; border: 4px solid #f00; border-radius: 2px; color: #111; font: 18px/37px "Liberation Serif", serif; text-align: center; }

/* sheet tabs */
.sheetbar { display: flex; align-items: center; flex: none; height: 22px; background: #e6e6e6; border-top: 1px solid #cfcfcf; }
.sheetnav { display: flex; padding-left: 8px; width: 119px; }
.sheetnav button { width: 26px; height: 20px; }
.sheetnav svg { width: 12px; height: 12px; stroke: #aaa; }
.sheet-tab { width: 187px; height: 21px; background: #fff; border: 1px solid #ccc; border-top: 0; color: #3aa640; font-weight: 700; }
.sheet-add { width: 26px; }
.sheet-add svg { width: 14px; height: 14px; }
.grip { width: 3px; height: 10px; border: 1px solid #aaa; border-width: 0 1px; }
.sheet-add + .grip { margin-left: auto; }
.hscroll { display: flex; align-items: center; width: 558px; height: 14px; margin: 0 5px 0 7px; background: #dedede; }
.hscroll + .grip { margin-right: 23px; }
.arrow-left { width: 20px; height: 14px; }
.arrow-right { width: 20px; height: 14px; margin-left: auto; }
.arrow-left::before { content: ""; border: 3px solid transparent; border-right: 4px solid #777; border-left: 0; }
.arrow-right::before { content: ""; border: 3px solid transparent; border-left: 4px solid #777; border-right: 0; }
.hthumb { width: 477px; height: 14px; border: 1px solid #aaa; border-radius: 7px; background: #f3f3f3; }

/* status bar */
.status { display: flex; align-items: center; flex: none; height: 28px; }
.status svg { width: 18px; height: 18px; }
.macro { margin: 0 auto 0 15px; }
.views { display: flex; gap: 2px; padding-right: 10px; border-right: 1px solid #dcdcdc; }
.views button { width: 24px; height: 24px; }
.views .drop { width: 31px; gap: 1px; justify-content: flex-start; padding-left: 2px; }
.zoom { display: flex; align-items: center; padding: 0 16px 0 10px; }
.percent { gap: 4px; }
.minus { width: 12px; height: 12px; margin: 0 11px; background: linear-gradient(#555, #555) center / 12px 2px no-repeat; }
.plus { width: 12px; height: 12px; margin-left: 11px; background: linear-gradient(#555, #555) center / 12px 2px no-repeat, linear-gradient(#555, #555) center / 2px 12px no-repeat; }
.zoom input { width: 138px; height: 14px; appearance: none; background: linear-gradient(90deg, #777 50%, #bbb 50%) center / 100% 1px no-repeat; }
.zoom input::-webkit-slider-thumb { appearance: none; width: 12px; height: 12px; border: 1px solid #555; border-radius: 50%; background: #f3f3f3; }
```

FILE: grid.js
```js
const rows = [
  ["Name: Arsalan", "Email: arsalan@", "Age: 26", "Country: Pakista", "Status: new", "Job Title: Soft", "Export System Date: Ju", "Application Date:Ju", "Resume: https://presstigers.com/w", "Resume Path: https://presstigers.com/exporter/"],
  ["Name: Sehrish", "Email: sherish@", "Age: 31", "Country: USA", "Status: new", "Job Title: Soft", "Export System Date: Ju", "Application Date:Ju", "Resume: https://presstigers.com/w", "Resume Path: https://presstigers.com/exporter/"]
];
const body = document.getElementById("cells");
const columns = 14;

for (let r = 0; r < 29; r++) {
  const tr = body.insertRow();
  const head = document.createElement("th");
  head.textContent = r + 1;
  if (r === 0) head.className = "current";
  tr.append(head);
  const data = rows[r] || [];
  data.forEach((text, i) => {
    const td = tr.insertCell();
    td.textContent = text;
    if (i >= 8) td.className = "flag";
    // the last value runs on over the empty cells to its right
    if (i === data.length - 1) td.colSpan = columns - i;
  });
  if (!data.length) for (let c = 0; c < columns; c++) tr.insertCell();
}
```
